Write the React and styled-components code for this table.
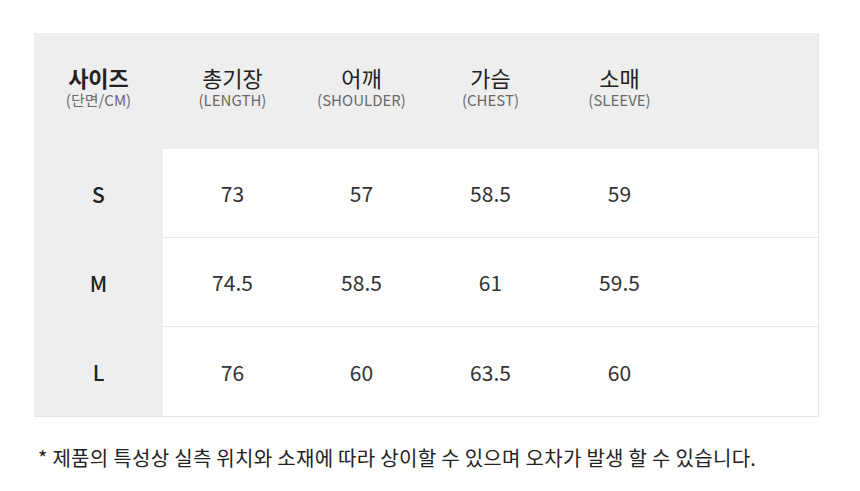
import React from "react";
import styled, { createGlobalStyle } from "styled-components";

const GlobalStyle = createGlobalStyle`
  body {
    margin: 0;
    background: #fff;
    font-family: "Noto Sans CJK KR", "Noto Sans", sans-serif;
    color: #222;
  }
`;

const columns = [
  { ko: "총기장", en: "(LENGTH)" },
  { ko: "어깨", en: "(SHOULDER)" },
  { ko: "가슴", en: "(CHEST)" },
  { ko: "소매", en: "(SLEEVE)" },
];

const rows = [
  { size: "S", values: ["73", "57", "58.5", "59"] },
  { size: "M", values: ["74.5", "58.5", "61", "59.5"] },
  { size: "L", values: ["76", "60", "63.5", "60"] },
];

const App = () => {
  return (
    <Page>
      <GlobalStyle />
      <Table>
        <HeaderRow>
          <SizeCell>
            <HeadTitle bold>사이즈</HeadTitle>
            <HeadSub>(단면/CM)</HeadSub>
          </SizeCell>
          <Cells>
            {columns.map((c) => (
              <Cell key={c.en}>
                <HeadTitle>{c.ko}</HeadTitle>
                <HeadSub>{c.en}</HeadSub>
              </Cell>
            ))}
          </Cells>
        </HeaderRow>
        {rows.map((r, i) => (
          <BodyRow key={r.size} last={i === rows.length - 1}>
            <SizeCell>
              <SizeLabel>{r.size}</SizeLabel>
            </SizeCell>
            <Cells white>
              {r.values.map((v, j) => (
                <Cell key={j}>
                  <Value>{v}</Value>
                </Cell>
              ))}
            </Cells>
          </BodyRow>
        ))}
      </Table>
      <Note>* 제품의 특성상 실측 위치와 소재에 따라 상이할 수 있으며 오차가 발생 할 수 있습니다.</Note>
    </Page>
  );
};

const Page = styled.div`
  width: 860px;
  height: 491px;
  padding: 33px 0 0 34px;
  box-sizing: border-box;
`;

const Table = styled.div`
  width: 784px;
  display: flex;
  flex-direction: column;
  background: #eeeeee;
  border-right: 1px solid #e6e6e6;
  border-bottom: 1px solid #e6e6e6;
`;

const HeaderRow = styled.div`
  display: flex;
  height: 116px;
`;

const BodyRow = styled.div`
  display: flex;
  height: 89px;
  & > div:last-child {
    border-bottom: ${(p) => (p.last ? "none" : "1px solid #e6e6e6")};
  }
`;

const SizeCell = styled.div`
  width: 129px;
  flex-shrink: 0;
  display: flex;
  flex-direction: column;
  align-items: center;
  justify-content: center;
`;

const Cells = styled.div`
  flex: 1;
  display: flex;
  padding-left: 5px;
  background: ${(p) => (p.white ? "#fff" : "transparent")};
`;

const Cell = styled.div`
  width: 129px;
  display: flex;
  flex-direction: column;
  align-items: center;
  justify-content: center;
`;

const HeadTitle = styled.div`
  font-size: 22px;
  line-height: 26px;
  font-weight: ${(p) => (p.bold ? 700 : 400)};
  color: #222;
`;

const HeadSub = styled.div`
  font-size: 15px;
  line-height: 20px;
  color: #6a6a6a;
  margin-bottom: 8px;
`;

const SizeLabel = styled.div`
  font-size: 21px;
  font-weight: 500;
  color: #222;
`;

const Value = styled.div`
  font-size: 21px;
  color: #333;
`;

const Note = styled.div`
  margin-top: 26px;
  margin-left: 4px;
  font-size: 20px;
  line-height: 30px;
  letter-spacing: 0.3px;
  color: #222;
`;

export default App;
